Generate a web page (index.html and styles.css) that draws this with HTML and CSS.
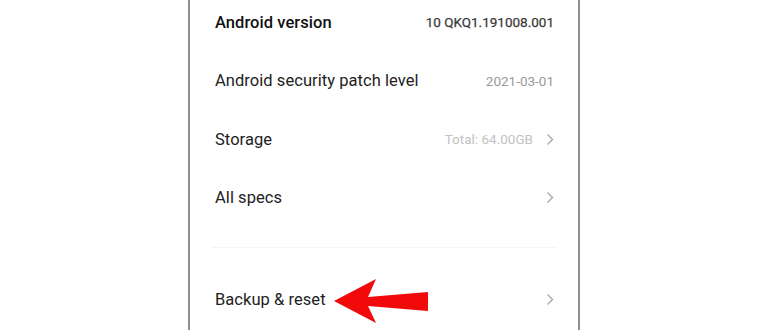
FILE: index.html
```html
<!DOCTYPE html>
<html>
<head>
<meta charset="utf-8">
<link rel="stylesheet" href="styles.css">
</head>
<body>
<div class="stage">
  <div class="phone">
    <div class="list">
      <div class="row">
        <span class="label bold">Android version</span>
        <span class="value dark">10 QKQ1.191008.001</span>
      </div>
      <div class="row">
        <span class="label">Android security patch level</span>
        <span class="value mid">2021-03-01</span>
      </div>
      <div class="row">
        <span class="label">Storage</span>
        <span class="value light">Total: 64.00GB</span>
        <svg class="chev" width="8" height="13" viewBox="0 0 8 13"><path d="M1.5 1.5 L6.5 6.5 L1.5 11.5" fill="none" stroke="#a8a8a8" stroke-width="1.4"/></svg>
      </div>
      <div class="row">
        <span class="label">All specs</span>
        <svg class="chev" width="8" height="13" viewBox="0 0 8 13"><path d="M1.5 1.5 L6.5 6.5 L1.5 11.5" fill="none" stroke="#a8a8a8" stroke-width="1.4"/></svg>
      </div>
      <div class="divider"></div>
      <div class="row">
        <span class="label">Backup &amp; reset</span>
        <svg class="chev" width="8" height="13" viewBox="0 0 8 13"><path d="M1.5 1.5 L6.5 6.5 L1.5 11.5" fill="none" stroke="#a8a8a8" stroke-width="1.4"/></svg>
      </div>
    </div>
  </div>
  <svg class="arrow" width="770" height="330" viewBox="0 0 770 330">
    <polygon points="334,301 376,279 368,297 428,292 428,311 368,306 376,323" fill="#f20a0a"/>
  </svg>
</div>
</body>
</html>
```
FILE: styles.css
```css
html, body {
  margin: 0;
  padding: 0;
  background: #ffffff;
}
.stage {
  position: relative;
  width: 770px;
  height: 330px;
  overflow: hidden;
  display: flex;
  justify-content: center;
  font-family: Roboto, "Noto Sans", sans-serif;
}
.phone {
  width: 388px;
  height: 330px;
  border-left: 2px solid #8e8e8e;
  border-right: 2px solid #8e8e8e;
  margin-left: -2px;
  box-sizing: content-box;
}
.list {
  margin-top: -7px;
  padding: 0 24px 0 25px;
  display: flex;
  flex-direction: column;
}
.row {
  height: 58.5px;
  display: flex;
  align-items: center;
}
.label {
  flex: 1;
  font-size: 16.5px;
  color: #222;
  letter-spacing: 0.05px;
}
.label.bold {
  font-weight: 500;
  color: #111;
}
.value {
  font-size: 13.5px;
}
.value.dark {
  color: #3a3a3a;
  font-size: 13.5px;
  -webkit-text-stroke: 0.25px #3a3a3a;
}
.value.mid {
  color: #9a9a9a;
}
.value.light {
  color: #c2c2c2;
  margin-right: 13px;
}
.chev {
  display: block;
}
.divider {
  height: 1px;
  background: #f5f5f5;
  margin: 20px -3px 22px -3px;
}
.arrow {
  position: absolute;
  left: 0;
  top: 0;
}
```
